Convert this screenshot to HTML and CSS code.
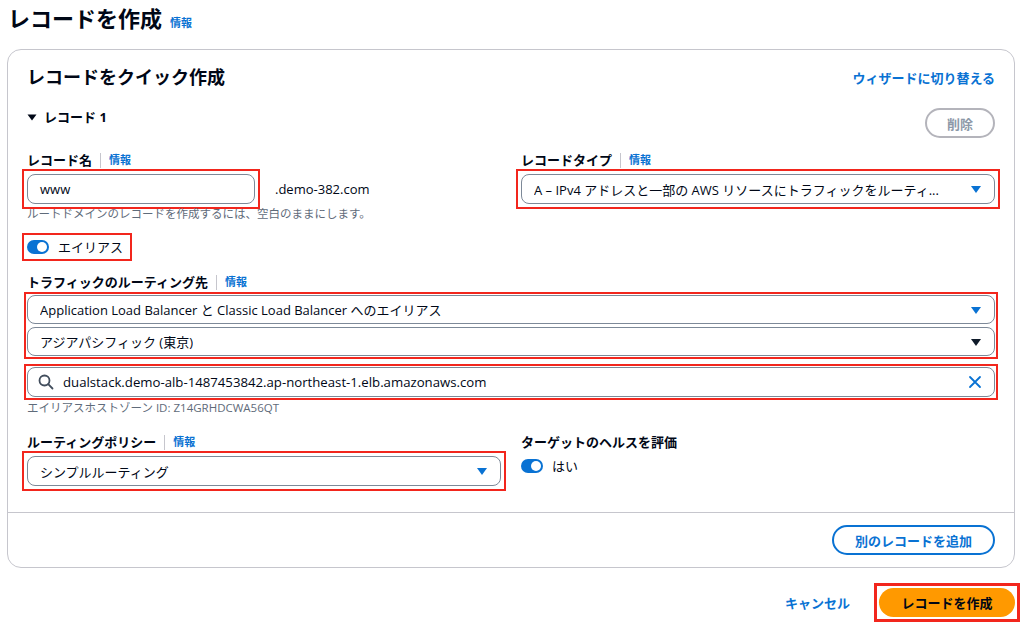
FILE: index.html
```html
<!DOCTYPE html>
<html lang="ja">

<head>
    <meta charset="UTF-8">
    <meta name="viewport" content="width=device-width, initial-scale=1.0">
    <title>レコードを作成</title>
    <link rel="stylesheet" href="styles.css">
</head>

<body>
    <div class="page">
        <div class="page-head">
            <h1>レコードを作成</h1>
            <a class="info">情報</a>
        </div>

        <div class="card">
            <div class="card-body">
                <div class="card-head">
                    <h2>レコードをクイック作成</h2>
                    <a class="link-strong">ウィザードに切り替える</a>
                </div>

                <div class="record-head">
                    <div class="record-title">
                        <svg class="caret" width="10" height="10" viewBox="0 0 10 10"><path d="M0.5 2.5 L9.5 2.5 L5 8.5 Z" fill="#000716"/></svg>
                        レコード 1
                    </div>
                    <div class="btn btn-normal">削除</div>
                </div>

                <div class="grid">
                    <div class="field">
                        <div class="label">レコード名<span class="sep"></span><a class="info">情報</a></div>
                        <div class="name-row">
                            <div class="mark">
                                <div class="input name-input">www</div>
                            </div>
                            <span class="suffix">.demo-382.com</span>
                        </div>
                        <div class="hint">ルートドメインのレコードを作成するには、空白のままにします。</div>
                    </div>
                    <div class="field">
                        <div class="label">レコードタイプ<span class="sep"></span><a class="info">情報</a></div>
                        <div class="mark">
                            <div class="input select">
                                <span class="value">A – IPv4 アドレスと一部の AWS リソースにトラフィックをルーティ...</span>
                                <svg width="12" height="12" viewBox="0 0 12 12"><path d="M1 3 L11 3 L6 10 Z" fill="#0972d3"/></svg>
                            </div>
                        </div>
                    </div>
                </div>

                <div class="toggle-row">
                    <div class="mark">
                        <div class="toggle-line">
                            <span class="toggle"></span>
                            <span>エイリアス</span>
                        </div>
                    </div>
                </div>

                <div class="field route">
                    <div class="label">トラフィックのルーティング先<span class="sep"></span><a class="info">情報</a></div>
                    <div class="mark mark-tight">
                        <div class="select-stack">
                            <div class="input select">
                                <span class="value">Application Load Balancer と Classic Load Balancer へのエイリアス</span>
                                <svg width="12" height="12" viewBox="0 0 12 12"><path d="M1 3 L11 3 L6 10 Z" fill="#0972d3"/></svg>
                            </div>
                            <div class="input select">
                                <span class="value">アジアパシフィック (東京)</span>
                                <svg width="12" height="12" viewBox="0 0 12 12"><path d="M1 3 L11 3 L6 10 Z" fill="#0f1b2a"/></svg>
                            </div>
                        </div>
                    </div>
                    <div class="mark mark-tight search-mark">
                        <div class="input search">
                            <svg width="16" height="16" viewBox="0 0 16 16"><circle cx="6.5" cy="6.5" r="5" fill="none" stroke="#414d5c" stroke-width="1.8"/><path d="M10.2 10.2 L14.5 14.5" stroke="#414d5c" stroke-width="1.8" stroke-linecap="round"/></svg>
                            <span class="value">dualstack.demo-alb-1487453842.ap-northeast-1.elb.amazonaws.com</span>
                            <svg class="clear" width="14" height="14" viewBox="0 0 14 14"><path d="M2 2 L12 12 M12 2 L2 12" stroke="#0972d3" stroke-width="1.8" stroke-linecap="round"/></svg>
                        </div>
                    </div>
                    <div class="hint">エイリアスホストゾーン ID: Z14GRHDCWA56QT</div>
                </div>

                <div class="grid policy">
                    <div class="field">
                        <div class="label">ルーティングポリシー<span class="sep"></span><a class="info">情報</a></div>
                        <div class="mark">
                            <div class="input select">
                                <span class="value">シンプルルーティング</span>
                                <svg width="12" height="12" viewBox="0 0 12 12"><path d="M1 3 L11 3 L6 10 Z" fill="#0972d3"/></svg>
                            </div>
                        </div>
                    </div>
                    <div class="field">
                        <div class="label">ターゲットのヘルスを評価</div>
                        <div class="toggle-line health">
                            <span class="toggle"></span>
                            <span>はい</span>
                        </div>
                    </div>
                </div>
            </div>

            <div class="card-foot">
                <div class="btn btn-blue">別のレコードを追加</div>
            </div>
        </div>

        <div class="actions">
            <a class="link-strong">キャンセル</a>
            <div class="mark-primary">
                <div class="btn btn-primary">レコードを作成</div>
            </div>
        </div>
    </div>
</body>

</html>
```

FILE: styles.css
```css
body {
    margin: 0px;
    padding: 0px;
    background-color: #ffffff;
    color: #000716;
    font-family: "Open Sans", "Noto Sans CJK JP", sans-serif;
    font-size: 13px;
}

.page {
    padding: 4px 9px 4px 7px;
}

.page-head {
    display: flex;
    align-items: baseline;
    gap: 8px;
    padding-left: 1px;
}

h1 {
    margin: 0px;
    font-size: 22px;
    line-height: 28px;
    font-weight: 700;
}

h2 {
    margin: 0px;
    font-size: 18px;
    line-height: 22px;
    font-weight: 700;
}

.info {
    color: #0972d3;
    font-size: 11px;
    font-weight: 700;
}

.link-strong {
    color: #0972d3;
    font-weight: 700;
    font-size: 13px;
}

.card {
    margin-top: 17px;
    border: 1px solid #c6c6cd;
    border-radius: 14px;
}

.card-body {
    padding: 16px 19px 26px 19px;
}

.card-head {
    display: flex;
    justify-content: space-between;
    align-items: center;
}

.record-head {
    margin-top: 20px;
    display: flex;
    justify-content: space-between;
    align-items: flex-start;
}

.record-title {
    display: flex;
    align-items: center;
    gap: 7px;
    font-weight: 700;
    line-height: 18px;
}

.btn {
    display: flex;
    align-items: center;
    justify-content: center;
    border-radius: 20px;
    font-weight: 700;
    box-sizing: border-box;
    cursor: pointer;
}

.btn-normal {
    width: 70px;
    height: 30px;
    border: 2px solid #b4b4bb;
    color: #8d99a8;
}

.grid {
    display: grid;
    grid-template-columns: 1fr 1fr;
    column-gap: 20px;
    margin-top: 13px;
}

.label {
    display: flex;
    align-items: center;
    font-weight: 700;
    line-height: 18px;
    margin-bottom: 5px;
}

.sep {
    width: 1px;
    height: 15px;
    background-color: #c6c6cd;
    margin: 0px 8px;
}

.mark {
    border: 2px solid #f2261d;
    padding: 3px;
    margin: -5px;
}

.mark-tight {
    padding: 1px;
    margin: -3px;
}

.input {
    height: 30px;
    box-sizing: border-box;
    border: 1px solid #7d8998;
    border-radius: 8px;
    display: flex;
    align-items: center;
    padding: 0px 12px;
    font-size: 13px;
    background-color: #ffffff;
}

.name-row {
    display: flex;
    align-items: center;
}

.name-row .mark {
    width: 228px;
}

.suffix {
    margin-left: 20px;
}

.select {
    justify-content: space-between;
}

.value {
    white-space: nowrap;
    overflow: hidden;
}

.hint {
    color: #5f6b7a;
    font-size: 11.5px;
    line-height: 16px;
    margin-top: 2px;
}

.toggle-row {
    margin-top: 16px;
    display: flex;
}

.toggle-line {
    display: flex;
    align-items: center;
    gap: 9px;
    line-height: 18px;
    padding-right: 4px;
}

.toggle {
    width: 22px;
    height: 14px;
    border-radius: 8px;
    background-color: #0972d3;
    position: relative;
}

.toggle::after {
    content: "";
    position: absolute;
    top: 2px;
    right: 2px;
    width: 10px;
    height: 10px;
    border-radius: 50%;
    background-color: #ffffff;
}

.route {
    margin-top: 17px;
}

.route .label {
    margin-bottom: 4px;
}

.select-stack {
    display: flex;
    flex-direction: column;
    gap: 3px;
}

.select-stack .input {
    height: 29px;
}

.search-mark {
    margin-top: 8px;
}

.search {
    gap: 9px;
    padding-left: 10px;
}

.search .value {
    flex: 1;
    font-size: 13.2px;
}

.route .hint {
    margin-top: 3px;
}

.policy {
    margin-top: 17px;
}

.health {
    margin-top: 6px;
}

.card-foot {
    border-top: 1px solid #c6c6cd;
    padding: 12px 19px 12px 19px;
    display: flex;
    justify-content: flex-end;
}

.btn-blue {
    width: 163px;
    height: 30px;
    border: 2px solid #0972d3;
    color: #0972d3;
}

.actions {
    display: flex;
    justify-content: flex-end;
    align-items: center;
    gap: 24px;
    margin-top: 15px;
    margin-right: -5px;
}

.mark-primary {
    border: 3px solid #f2261d;
    padding: 2px;
}

.btn-primary {
    width: 136px;
    height: 29px;
    background-color: #ff9900;
    color: #000716;
}
```
